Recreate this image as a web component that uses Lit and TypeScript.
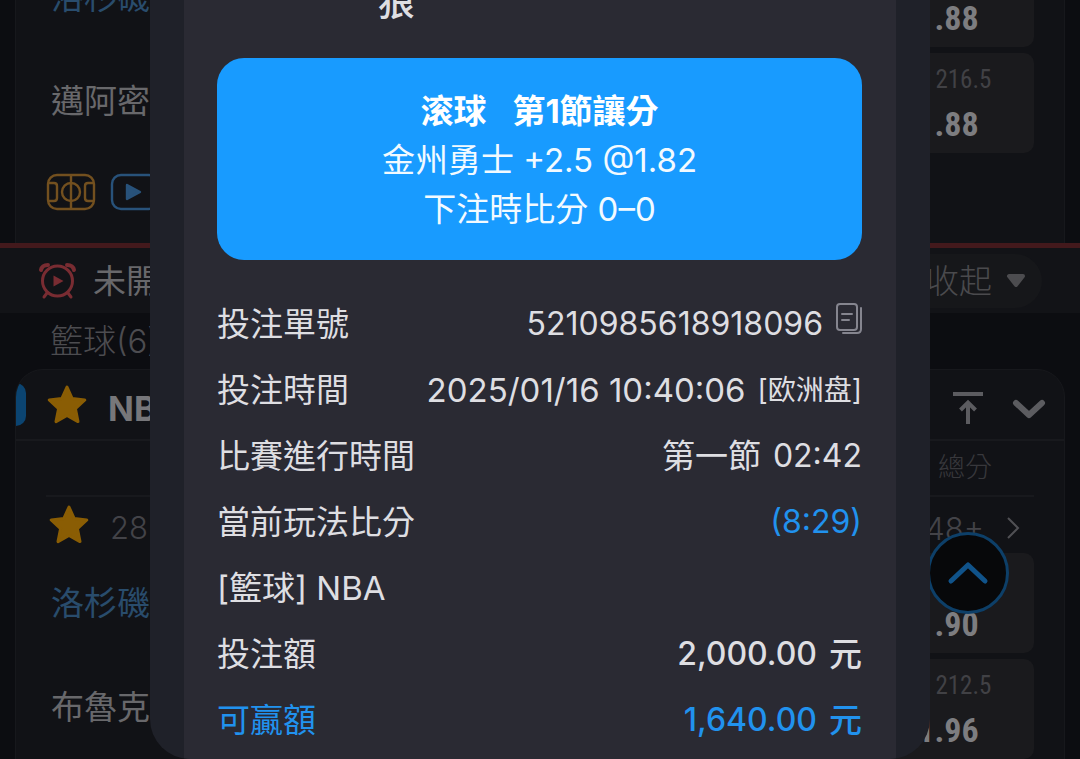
import { LitElement, html, css, nothing } from "lit";
import { customElement, property } from "lit/decorators.js";

const star = html`<svg class="star" viewBox="0 0 42 42" aria-hidden="true">
  <path
    d="M21 3 L26.2 14.6 L38.8 16 L29.4 24.6 L32 37.6 L21 31.4 L10 37.6 L12.6 24.6 L3.2 16 L15.8 14.6 Z"
    fill="currentColor"
    stroke="currentColor"
    stroke-width="3"
    stroke-linejoin="round"
  />
</svg>`;

@customElement("odds-cell")
export class OddsCell extends LitElement {
  @property() line = "";
  @property() odds = "";

  static styles = css`
    :host {
      display: block;
    }
    .cell {
      display: flex;
      flex-direction: column;
      align-items: center;
      justify-content: flex-end;
      width: 100%;
      height: 100px;
      padding: 0 0 5px;
      border: 0;
      border-radius: 10px;
      background: #1a1a1d;
      font-family: "Roboto Condensed", "Liberation Sans Narrow", Roboto, "Noto Sans CJK TC", sans-serif;
    }
    .line {
      font-size: 25px;
      line-height: 40px;
      color: #414145;
    }
    .odds {
      font-size: 34px;
      line-height: 48px;
      font-weight: 700;
      color: #7d7d80;
    }
  `;

  render() {
    return html`<button class="cell">
      ${this.line ? html`<span class="line">${this.line}</span>` : nothing}
      <span class="odds">${this.odds}</span>
    </button>`;
  }
}

@customElement("match-list")
export class MatchList extends LitElement {
  static styles = css`
    :host {
      display: block;
      font-family: Inter, "Noto Sans CJK TC", sans-serif;
      font-weight: 300;
    }
    button {
      font: inherit;
      color: inherit;
      border: 0;
      padding: 0;
      background: none;
    }
    svg {
      display: block;
    }
    .list {
      display: flex;
      flex-direction: column;
      margin-top: -53px;
    }
    .card {
      margin: 0 15px;
      border: 1px solid #17181c;
      background: #111216;
    }
    .card.first {
      border-width: 0 1px;
    }
    .card.second {
      border-radius: 28px 28px 0 0;
      overflow: hidden;
    }
    .match {
      display: grid;
      grid-template-columns: 1fr 172px;
      row-gap: 6px;
      align-items: center;
      padding: 0 30px 0 35px;
    }
    .team {
      padding-bottom: 4px;
      font-size: 33px;
      line-height: 48px;
      font-weight: 400;
      color: #68686b;
    }
    .team.home {
      padding-bottom: 0;
      color: #294c6c;
    }
    .media {
      display: flex;
      gap: 14px;
      padding: 20px 30px 32px;
    }
    .section {
      display: flex;
      align-items: center;
      height: 65px;
      padding: 0 38px;
      border-top: 5px solid #43191c;
      background: #121317;
      color: #68686b;
      font-size: 33px;
      line-height: 48px;
    }
    .section .label {
      margin: 0 auto 0 16px;
      font-weight: 400;
    }
    .fold {
      display: flex;
      align-items: center;
      gap: 14px;
      height: 54px;
      padding: 0 16px 0 34px;
      border-radius: 27px;
      background: #16171a;
      color: #4a4a4d;
    }
    .sport {
      height: 56px;
      padding-left: 50px;
      font-size: 33px;
      line-height: 56px;
      color: #4c4c50;
    }
    .league {
      display: flex;
      align-items: center;
      height: 69px;
      padding-right: 18px;
      border-bottom: 2px solid #18191d;
    }
    .mark {
      width: 10px;
      height: 43px;
      border-radius: 0 10px 10px 0;
      background: #0b4471;
    }
    .star {
      width: 42px;
      height: 42px;
      color: #8a5d04;
    }
    .league .star {
      margin: 0 20px;
    }
    .league .name {
      margin-right: auto;
      font-size: 34px;
      font-weight: 700;
      color: #77777a;
      padding-top: 8px;
    }
    .tools {
      display: flex;
      gap: 28px;
      padding-top: 6px;
    }
    .columns {
      display: flex;
      justify-content: flex-end;
      margin: 0 30px;
      padding-right: 42px;
      border-bottom: 2px solid #18191d;
      font-size: 27px;
      line-height: 54px;
      color: #38383c;
    }
    .info {
      display: flex;
      align-items: center;
      height: 56px;
      padding: 0 44px 0 32px;
      font-size: 31px;
      color: #434348;
    }
    .info .clock {
      margin: 4px auto 0 20px;
    }
    .info .more {
      display: flex;
      align-items: center;
      gap: 22px;
      padding-top: 6px;
    }
  `;

  render() {
    return html`<main class="list">
      <section class="card first">
        <div class="match">
          <span class="team home">洛杉磯</span>
          <odds-cell odds="1.88"></odds-cell>
          <span class="team">邁阿密</span>
          <odds-cell line="小 216.5" odds="1.88"></odds-cell>
        </div>
        <div class="media">
          <svg width="50" height="38" viewBox="0 0 50 38" fill="none" stroke="#73501f" stroke-width="2.4">
            <rect x="2" y="2" width="46" height="34" rx="9" />
            <path d="M25 2V36M2 10H8Q11 10 11 13V25Q11 28 8 28H2M48 10H42Q39 10 39 13V25Q39 28 42 28H48" />
            <circle cx="25" cy="19" r="9" />
          </svg>
          <svg width="50" height="38" viewBox="0 0 50 38" fill="none" stroke="#28527a" stroke-width="2.4">
            <rect x="2" y="2" width="46" height="34" rx="9" />
            <path d="M17 12 L30 19 L17 26 Z" fill="#28527a" stroke-linejoin="round" />
          </svg>
        </div>
      </section>

      <header class="section">
        <svg width="39" height="38" viewBox="0 0 39 38" fill="none" stroke="#792c32" stroke-width="3">
          <circle cx="19.5" cy="19" r="15" />
          <path d="M3 8Q4 3 10 3M36 8Q35 3 29 3" stroke-width="4" stroke-linecap="round" />
          <path d="M9 31L6 35M30 31L33 35" stroke-linecap="round" />
          <path d="M15.5 13.5L25.5 19L15.5 24.5Z" fill="#792c32" stroke="none" />
        </svg>
        <span class="label">未開</span>
        <button class="fold">
          收起
          <svg width="20" height="16" viewBox="0 0 20 16">
            <path d="M3 3H17L10 12Z" fill="#4c4c4f" stroke="#4c4c4f" stroke-width="4" stroke-linejoin="round" />
          </svg>
        </button>
      </header>
      <div class="sport">籃球(6)</div>

      <section class="card second">
        <div class="league">
          <span class="mark"></span>
          ${star}
          <span class="name">NBA</span>
          <div class="tools">
            <button aria-label="置頂">
              <svg width="32" height="34" viewBox="0 0 32 34" fill="none" stroke="#5c5c60" stroke-width="4">
                <path d="M1 3H31M16 33V12M8.500 19L16 11.500L23.500 19" />
              </svg>
            </button>
            <button aria-label="展開">
              <svg width="34" height="34" viewBox="0 0 34 34" fill="none" stroke="#5c5c60" stroke-width="6">
                <path d="M4 12L17 24L30 12" stroke-linecap="round" stroke-linejoin="round" />
              </svg>
            </button>
          </div>
        </div>
        <div class="columns">總分</div>
        <div class="info">
          ${star}
          <span class="clock">28+</span>
          <button class="more">
            48+
            <svg width="14" height="24" viewBox="0 0 14 24" fill="none" stroke="#505054" stroke-width="2">
              <path d="M2 2L12 12L2 22" />
            </svg>
          </button>
        </div>
        <div class="match">
          <span class="team home">洛杉磯</span>
          <odds-cell odds="1.90"></odds-cell>
          <span class="team">布魯克</span>
          <odds-cell line="小 212.5" odds="1.96"></odds-cell>
        </div>
      </section>
    </main>`;
  }
}

@customElement("bet-slip")
export class BetSlip extends LitElement {
  static styles = css`
    :host {
      display: block;
      font-family: Inter, "Noto Sans CJK TC", sans-serif;
    }
    .slip {
      overflow: hidden;
      padding: 0 34px;
      border-radius: 40px;
      background: #1f2129;
    }
    .panel {
      padding: 40px 34px 6px 33px;
      background: #2a2a33;
      color: #dedee2;
    }
    .teams {
      display: grid;
      grid-template-columns: 5fr 4fr;
      padding-bottom: 28px;
      font-size: 37px;
      line-height: 54px;
      font-weight: 500;
      text-align: center;
    }
    .pick {
      padding: 29px 0 26px;
      border-radius: 27px;
      background: #189bff;
      color: #f2faff;
      text-align: center;
      font-size: 33px;
      line-height: 49px;
    }
    .pick p {
      margin: 0;
    }
    .pick .market {
      display: flex;
      justify-content: center;
      gap: 26px;
      font-weight: 700;
      color: #fff;
    }
    .rows {
      margin: 31px 0 0;
      font-size: 33px;
      line-height: 66px;
    }
    .row {
      display: flex;
      justify-content: space-between;
    }
    .row dt,
    .row dd {
      margin: 0;
      white-space: nowrap;
    }
    .row dd {
      display: flex;
      align-items: center;
      gap: 12px;
    }
    .figure {
      font-size: 32px;
    }
    .market-type {
      font-size: 28px;
    }
    .blue {
      color: #2192ee;
    }
    .strong {
      font-weight: 500;
    }
    .copy {
      padding: 0;
      border: 0;
      background: none;
    }
    .copy svg {
      display: block;
    }
  `;

  render() {
    return html`<div class="slip" role="dialog">
      <div class="panel">
        <div class="teams"><span>狼</span></div>
        <div class="pick">
          <p class="market"><span>滚球</span><span>第1節讓分</span></p>
          <p>金州勇士 +2.5 @1.82</p>
          <p>下注時比分 0–0</p>
        </div>
        <dl class="rows">
          <div class="row">
            <dt>投注單號</dt>
            <dd>
              <span class="figure">5210985618918096</span>
              <button class="copy" aria-label="複製">
                <svg width="27" height="42" viewBox="0 0 27 42" fill="none" stroke="#85858f" stroke-width="2">
                  <rect x="2" y="1" width="20" height="26" rx="3" />
                  <path d="M8 30H22Q26 30 26 26V5M7 11H17M7 17H14" stroke-linecap="round" />
                </svg>
              </button>
            </dd>
          </div>
          <div class="row">
            <dt>投注時間</dt>
            <dd>2025/01/16 10:40:06<span class="market-type">[欧洲盘]</span></dd>
          </div>
          <div class="row">
            <dt>比賽進行時間</dt>
            <dd><span>第一節</span><span class="figure">02:42</span></dd>
          </div>
          <div class="row">
            <dt>當前玩法比分</dt>
            <dd class="blue"><span class="figure">(8:29)</span></dd>
          </div>
          <div class="row"><dt>[籃球] NBA</dt></div>
          <div class="row">
            <dt>投注額</dt>
            <dd class="strong"><span class="figure">2,000.00</span><span>元</span></dd>
          </div>
          <div class="row blue">
            <dt>可贏額</dt>
            <dd class="strong"><span class="figure">1,640.00</span><span>元</span></dd>
          </div>
        </dl>
      </div>
    </div>`;
  }
}

@customElement("app-root")
export class AppRoot extends LitElement {
  static styles = css`
    :host {
      display: block;
      position: relative;
      height: 100vh;
      overflow: hidden;
      background: #0c0d11;
    }
    .top {
      position: absolute;
      right: 71px;
      bottom: 145px;
      display: grid;
      place-items: center;
      width: 82px;
      height: 82px;
      padding: 0;
      border: 3px solid #0d3f68;
      border-radius: 50%;
      background: #07080a;
    }
    .overlay {
      position: absolute;
      inset: 0;
      display: flex;
      align-items: flex-end;
      justify-content: center;
    }
    .dialog {
      width: 780px;
      max-width: 100%;
    }
  `;

  render() {
    return html`
      <match-list></match-list>
      <button class="top" aria-label="回到頂部">
        <svg width="42" height="26" viewBox="0 0 42 26" fill="none" stroke="#10538a" stroke-width="5">
          <path d="M4 21L21 5L38 21" stroke-linecap="round" stroke-linejoin="round" />
        </svg>
      </button>
      <div class="overlay"><bet-slip class="dialog"></bet-slip></div>
    `;
  }
}
